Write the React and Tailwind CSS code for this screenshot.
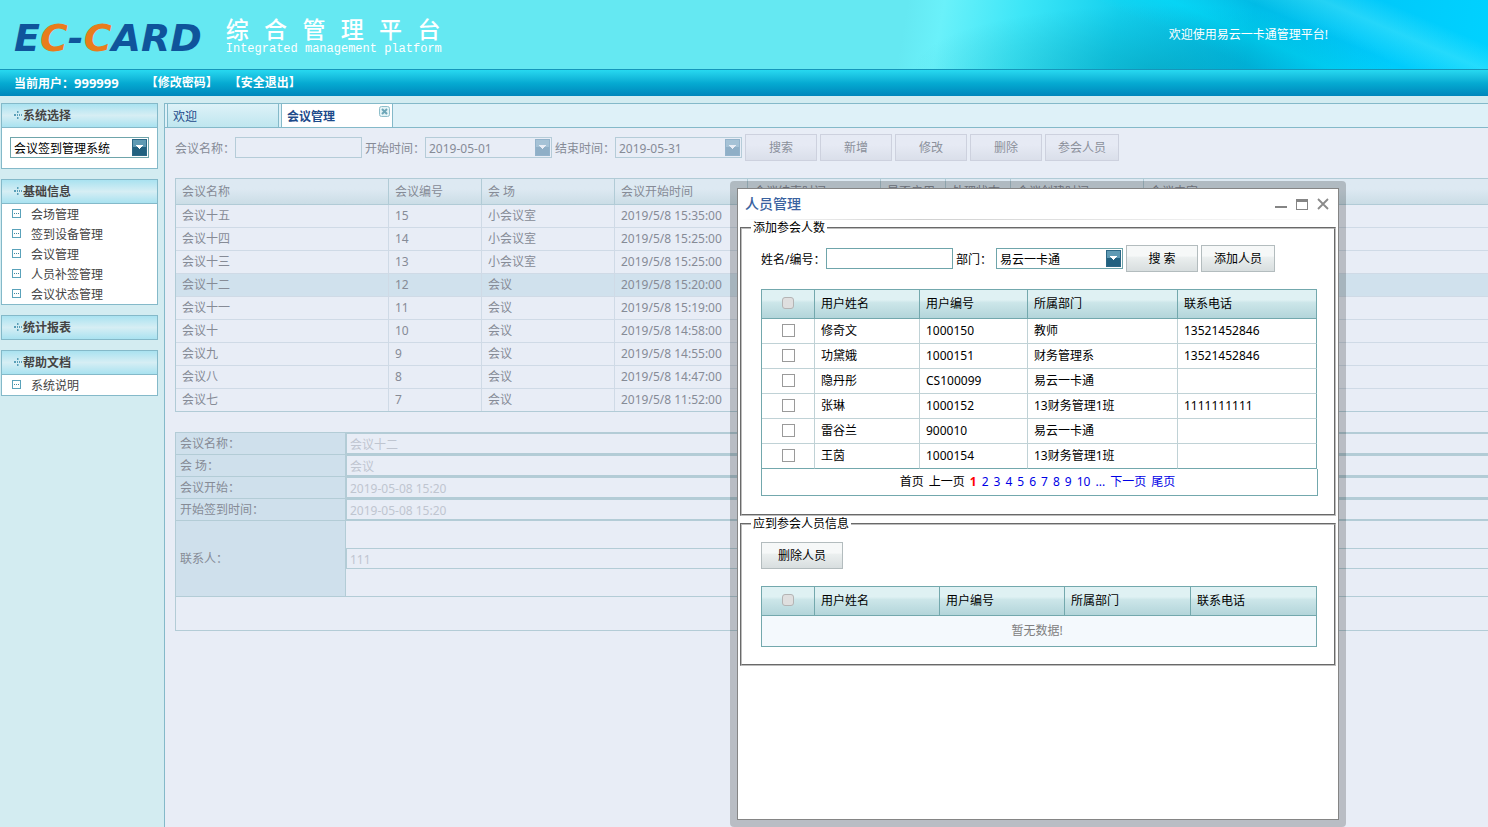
import { useState } from "react";

const menuGroups = [
  {
    title: "基础信息",
    items: ["会场管理", "签到设备管理", "会议管理", "人员补签管理", "会议状态管理"],
  },
  { title: "统计报表", items: [] },
  { title: "帮助文档", items: ["系统说明"] },
];

const meetingColumns = [
  ["会议名称", "w-[213px]"],
  ["会议编号", "w-[93px]"],
  ["会 场", "w-[133px]"],
  ["会议开始时间", "w-[133px]"],
  ["会议结束时间", "w-[133px]"],
  ["是否启用", "w-[65px]"],
  ["处理状态", "w-[65px]"],
  ["会议创建时间", "w-[133px]"],
  ["会议内容", ""],
];

const meetings = [
  ["会议十五", "15", "小会议室", "2019/5/8 15:35:00"],
  ["会议十四", "14", "小会议室", "2019/5/8 15:25:00"],
  ["会议十三", "13", "小会议室", "2019/5/8 15:25:00"],
  ["会议十二", "12", "会议", "2019/5/8 15:20:00"],
  ["会议十一", "11", "会议", "2019/5/8 15:19:00"],
  ["会议十", "10", "会议", "2019/5/8 14:58:00"],
  ["会议九", "9", "会议", "2019/5/8 14:55:00"],
  ["会议八", "8", "会议", "2019/5/8 14:47:00"],
  ["会议七", "7", "会议", "2019/5/8 11:52:00"],
];

const people = [
  ["修奇文", "1000150", "教师", "13521452846"],
  ["功黛娥", "1000151", "财务管理系", "13521452846"],
  ["隐丹彤", "CS100099", "易云一卡通", ""],
  ["张琳", "1000152", "13财务管理1班", "1111111111"],
  ["雷谷兰", "900010", "易云一卡通", ""],
  ["王茵", "1000154", "13财务管理1班", ""],
];

const details = [
  ["会议名称：", "会议十二", "d-name"],
  ["会 场：", "会议", "d-place"],
  ["会议开始：", "2019-05-08 15:20", "d-start"],
  ["开始签到时间：", "2019-05-08 15:20", "d-sign"],
];

function GroupIcon() {
  return (
    <svg width="9" height="9" viewBox="0 0 9 9" fill="#5a9fb8" aria-hidden="true">
      <rect x="0" y="3" width="2" height="2" />
      <rect x="3" y="0" width="1" height="2" />
      <rect x="3" y="3" width="1" height="2" />
      <rect x="3" y="6" width="1" height="2" />
      <rect x="4" y="0" width="1" height="2" opacity="0.5" />
      <rect x="4" y="6" width="1" height="2" opacity="0.5" />
      <rect x="5" y="3" width="1" height="2" />
      <rect x="7" y="3" width="1" height="2" />
    </svg>
  );
}

function ItemIcon() {
  return (
    <svg className="mt-[5px]" width="9" height="9" viewBox="0 0 9 9" aria-hidden="true">
      <rect x="0.5" y="0.5" width="8" height="8" fill="#fff" stroke="#5aa2ba" />
      <rect x="2" y="4" width="1" height="1" fill="#3f88a2" />
      <rect x="4" y="4" width="1" height="1" fill="#3f88a2" />
      <rect x="6" y="4" width="1" height="1" fill="#3f88a2" />
    </svg>
  );
}

function Arrow({ faded }) {
  return (
    <svg
      className="pointer-events-none absolute right-[2px] top-[2px]"
      width="15"
      height="17"
      viewBox="0 0 15 17"
      aria-hidden="true"
    >
      <rect width="15" height="17" fill={faded ? "#93b3cb" : "#2c6886"} />
      <rect x="1" y="1" width="13" height="7" fill={faded ? "#a5c2d6" : "#5f9ab4"} />
      <rect x="1" y="8" width="13" height="8" fill={faded ? "#8fafc7" : "#226180"} />
      <path d="M4 6h7v1h-1v1h-1v1h-1v1h-1v-1h-1v-1h-1v-1h-1z" fill={faded ? "#e8edf6" : "#fff"} />
    </svg>
  );
}

function PanelTitle({ children, open }) {
  return (
    <h2
      className={
        "flex h-[23px] items-center bg-linear-to-b from-[#a9e2f0] via-[#d6eef4] to-[#a9e2f0] pl-[12px] text-[12px] font-bold text-[#444] " +
        (open ? "box-content border-b border-[#84b9c9]" : "")
      }
    >
      <GroupIcon />
      {children}
    </h2>
  );
}

function FadedButton({ children, wide }) {
  return (
    <button
      type="button"
      className={
        "h-[27px] border border-[#cdd1de] bg-linear-to-b from-[#e6eaf4] from-40% to-[#dadfea] text-[#8b909b] " +
        (wide ? "w-[74px]" : "w-[72px]")
      }
    >
      {children}
    </button>
  );
}

function DialogButton({ children, width }) {
  return (
    <button
      type="button"
      className={
        "h-[27px] border border-[#b3bcbe] bg-linear-to-b from-[#f6f8f8] from-40% via-[#ebefef] via-45% to-[#d8dedf] text-black " + width
      }
    >
      {children}
    </button>
  );
}

function HeadCheck({ label }) {
  return (
    <div className="-ml-[6px] flex justify-center pb-[2px]">
      <input
        type="checkbox"
        disabled
        aria-label={label}
        className="block size-[12px] appearance-none rounded-[3px] border border-[#b4b4b4] bg-[#dfdfdf]"
      />
    </div>
  );
}

const headCell =
  "h-[29px] border-r border-b border-[#73a8ad] bg-linear-to-b from-[#dff1f3] from-35% via-[#cce6e9] via-45% to-[#b3d5da] pl-[6px] text-left font-normal";

export default function App() {
  const [checked, setChecked] = useState({});

  return (
    <div
      lang="zh-CN"
      className="relative flex min-h-screen flex-col overflow-hidden bg-[#d3ecf1] font-['Noto_Sans','Noto_Sans_CJK_SC',sans-serif] text-[12px] leading-[16px] text-black"
    >
      <header>
        <div className="flex h-[69px] bg-[#65e8f2]">
          <div className="flex flex-1 gap-[24px] pl-[14px]">
            <div className="pt-[16px] font-['DejaVu_Sans',sans-serif] text-[38px] leading-[44px] font-bold text-[#0f549b] italic">
              E<span className="text-[#e87c1c]">C</span>-<span className="text-[#e87c1c]">C</span>ARD
            </div>
            <div className="pt-[17px] text-white">
              <h1 className="text-[23px] leading-[24px] font-medium whitespace-nowrap">
                {"综\u2002\u2006合\u2002\u2006管\u2002\u2006理\u2002\u2006平\u2002\u2006台"}
              </h1>
              <p className="font-['Liberation_Mono',monospace] text-[12px] leading-[16px] whitespace-nowrap">
                Integrated management platform
              </p>
            </div>
          </div>
          <div className="flex w-[598px] items-center justify-end bg-[radial-gradient(ellipse_240px_64px_at_44%_100%,rgba(0,130,150,0.35),transparent),linear-gradient(203deg,transparent_14%,rgba(120,245,250,0.3)_22%,transparent_32%,rgba(0,225,255,0.5)_42%,transparent_52%),linear-gradient(100deg,#65e8f2_3%,#6af1fa_9%,#3de6f7_22%,#14d0ee_38%,#00bbe6_60%,#00c8fa_78%,#00d2ff_100%)] pr-[160px] text-white">
            欢迎使用易云一卡通管理平台!
          </div>
        </div>
        <div className="flex h-[27px] items-center border-t border-[#1496ba] bg-linear-to-b from-[#27d8f0] via-[#06abd2] to-[#0086bb] pl-[14px] font-bold text-white">
          <span>
            当前用户：<span className="text-[13px]">999999</span>
          </span>
          <a href="#password" className="ml-[27px]">【修改密码】</a>
          <a href="#logout" className="ml-[11px]">【安全退出】</a>
        </div>
      </header>

      <div className="flex flex-1 pt-[7px]">
        <aside className="flex w-[164px] shrink-0 flex-col gap-[10px] pr-[6px] pl-[1px]">
          <section className="border border-[#84b9c9] bg-white">
            <PanelTitle open>系统选择</PanelTitle>
            <div className="h-[40px] px-[8px] pt-[9px]">
              <div className="relative">
                <select
                  aria-label="系统选择"
                  className="block h-[21px] w-full appearance-none border border-[#6fa5ab] bg-white pt-[2px] pl-[3px] leading-[17px]"
                >
                  <option>会议签到管理系统</option>
                </select>
                <Arrow />
              </div>
            </div>
          </section>
          {menuGroups.map((g) => (
            <section key={g.title} className="border border-[#84b9c9] bg-white">
              <PanelTitle open={g.items.length > 0}>{g.title}</PanelTitle>
              {g.items.length > 0 && (
                <ul>
                  {g.items.map((it) => (
                    <li key={it}>
                      <a
                        href={"#" + it}
                        className="flex h-[20px] items-start gap-[10px] pl-[10px] leading-[22px] text-[#444]"
                      >
                        <ItemIcon />
                        {it}
                      </a>
                    </li>
                  ))}
                </ul>
              )}
            </section>
          ))}
        </aside>

        <main className="min-w-0 flex-1 overflow-hidden border-t border-l border-[#84b9c9] bg-[#e8edf6] text-[#868b96]">
          <nav className="flex h-[24px] gap-[2px] border-b border-[#84b9c9] bg-[#def1f8] pl-[2px] leading-[25px] text-[#1d4a8a]">
            <a
              href="#welcome"
              className="w-[112px] border-x border-[#84b9c9] bg-linear-to-b from-[#def2f8] to-[#bfe6ef] pl-[5px]"
            >
              欢迎
            </a>
            <div className="flex w-[112px] items-start justify-between border-x border-[#84b9c9] bg-white pr-[2px] pl-[5px]">
              <a href="#meeting" className="font-bold">会议管理</a>
              <button type="button" aria-label="关闭" className="mt-[2px] size-[11px]">
                <svg className="block" width="11" height="11" viewBox="0 0 11 11" aria-hidden="true">
                  <rect x="0.5" y="0.5" width="10" height="10" rx="2" fill="#e3f3f6" stroke="#8fbfcb" />
                  <path d="M3 3l5 5M8 3l-5 5" stroke="#6ea6b8" strokeWidth="2" />
                </svg>
              </button>
            </div>
          </nav>

          <div className="pl-[10px]">
            <form className="flex items-center gap-[3px] pt-[6px]" onSubmit={(e) => e.preventDefault()}>
              <div className="flex items-center">
                <label htmlFor="q-name" className="w-[60px] pt-[2px]">会议名称：</label>
                <input id="q-name" className="h-[21px] w-[127px] border border-[#b5ccd8] px-[3px]" />
              </div>
              <div className="flex items-center">
                <label htmlFor="q-from" className="w-[60px] pt-[2px]">开始时间：</label>
                <div className="relative">
                  <input
                    id="q-from"
                    defaultValue="2019-05-01"
                    className="block h-[21px] w-[127px] border border-[#b5ccd8] px-[3px] pt-[2px]"
                  />
                  <Arrow faded />
                </div>
              </div>
              <div className="flex items-center">
                <label htmlFor="q-to" className="w-[60px] pt-[2px]">结束时间：</label>
                <div className="relative">
                  <input
                    id="q-to"
                    defaultValue="2019-05-31"
                    className="block h-[21px] w-[127px] border border-[#b5ccd8] px-[3px] pt-[2px]"
                  />
                  <Arrow faded />
                </div>
              </div>
              <FadedButton>搜索</FadedButton>
              <FadedButton>新增</FadedButton>
              <FadedButton>修改</FadedButton>
              <FadedButton>删除</FadedButton>
              <FadedButton wide>参会人员</FadedButton>
            </form>

            <div className="-mr-[4px] mt-[17px]">
              <table className="w-full table-fixed border-separate border-spacing-0 border-t border-b border-l border-[#b1cbd6]">
                <thead>
                  <tr>
                    {meetingColumns.map(([name, w]) => (
                      <th
                        key={name}
                        className={
                          "h-[26px] overflow-hidden border-r border-b border-[#b1cbd6] bg-linear-to-b from-[#dde9f2] from-40% to-[#cbdde6] pl-[6px] text-left font-normal whitespace-nowrap " +
                          w
                        }
                      >
                        {name}
                      </th>
                    ))}
                  </tr>
                </thead>
                <tbody>
                  {meetings.map((m, i) => (
                    <tr key={m[1]} className={i === 3 ? "bg-[#d0e1ed]" : ""}>
                      {meetingColumns.map(([name], c) => (
                        <td
                          key={name}
                          className={
                            "border-r border-[#cfdae6] pl-[6px] " +
                            (i < meetings.length - 1 ? "h-[23px] border-b" : "h-[22px]")
                          }
                        >
                          {m[c]}
                        </td>
                      ))}
                    </tr>
                  ))}
                </tbody>
              </table>

              <table className="mt-[20px] w-full border-separate border-spacing-0 border-t border-l border-[#b3ccd6]">
                <tbody>
                  {details.map(([label, value, id]) => (
                    <tr key={id}>
                      <th className="h-[22px] w-[170px] border-r border-b border-[#b3ccd6] bg-[#cfe0ec] pl-[4px] text-left font-normal">
                        <label htmlFor={id}>{label}</label>
                      </th>
                      <td className="border-b border-[#b3ccd6]">
                        <input
                          id={id}
                          disabled
                          defaultValue={value}
                          className="block h-[21px] w-full border border-[#b3ccd6] px-[3px] pt-px text-[#bfc5d0]"
                        />
                      </td>
                    </tr>
                  ))}
                  <tr>
                    <th className="h-[76px] border-r border-b border-[#b3ccd6] bg-[#cfe0ec] pl-[4px] text-left font-normal">
                      <label htmlFor="d-contact">联系人：</label>
                    </th>
                    <td className="border-b border-[#b3ccd6]">
                      <input
                        id="d-contact"
                        disabled
                        defaultValue="111"
                        className="block h-[21px] w-full border border-[#b3ccd6] px-[3px] pt-px text-[#bfc5d0]"
                      />
                    </td>
                  </tr>
                  <tr>
                    <td colSpan={2} className="h-[34px] border-b border-[#b3ccd6]" />
                  </tr>
                </tbody>
              </table>
            </div>
          </div>
        </main>
      </div>

      <div
        role="dialog"
        aria-labelledby="dlg-title"
        className="absolute top-[181px] left-[730px] flex h-[646px] w-[616px] rounded-[4px] bg-black/20 p-[7px]"
      >
        <div className="flex-1 border border-[#858585] bg-white">
          <div className="flex h-[30px] items-center justify-between pr-[9px] pl-[7px]">
            <h2 id="dlg-title" className="text-[14px] leading-[20px] font-medium text-[#3a62a0]">人员管理</h2>
            <div className="flex items-center gap-[9px]">
              <button type="button" aria-label="最小化">
                <svg width="12" height="12" viewBox="0 0 12 12" className="block" aria-hidden="true">
                  <rect y="8" width="12" height="2" fill="#858585" />
                </svg>
              </button>
              <button type="button" aria-label="最大化">
                <svg width="12" height="12" viewBox="0 0 12 12" className="block" aria-hidden="true">
                  <rect x="0.5" y="1.5" width="11" height="10" fill="none" stroke="#858585" />
                  <rect y="1" width="12" height="3" fill="#858585" />
                </svg>
              </button>
              <button type="button" aria-label="关闭">
                <svg width="12" height="12" viewBox="0 0 12 12" className="block" aria-hidden="true">
                  <path d="M1 1l10 10M11 1l-10 10" stroke="#8a8a8a" strokeWidth="1.8" />
                </svg>
              </button>
            </div>
          </div>
          <div className="h-px bg-linear-to-r from-white via-[#d0d0d0] via-30% to-white" />

          <fieldset className="mx-[2px] border-2 border-[#bdbdbd] px-[9px] [border-style:groove]">
            <legend className="px-[2px] leading-[16px]">添加参会人数</legend>
            <div className="pt-[9px] pr-[7px] pb-[18px] pl-[10px]">
              <div className="flex items-center gap-[3px]">
                <div className="flex items-center">
                  <label htmlFor="p-name" className="w-[65px] pt-[2px]">姓名/编号：</label>
                  <input id="p-name" className="h-[21px] w-[127px] border border-[#6fa5ab] px-[3px]" />
                </div>
                <div className="flex items-center">
                  <label htmlFor="p-dept" className="w-[40px] pt-[2px]">部门：</label>
                  <div className="relative">
                    <select
                      id="p-dept"
                      className="block h-[21px] w-[127px] appearance-none border border-[#6fa5ab] bg-white pt-[2px] pl-[3px] leading-[17px]"
                    >
                      <option>易云一卡通</option>
                    </select>
                    <Arrow />
                  </div>
                </div>
                <DialogButton width="w-[72px]">搜 索</DialogButton>
                <DialogButton width="w-[74px]">添加人员</DialogButton>
              </div>

              <div className="mt-[17px] pr-px">
                <table className="w-full table-fixed border-separate border-spacing-0 border-t border-l border-[#73a8ad]">
                  <thead>
                    <tr>
                      <th className={headCell + " w-[53px]"}>
                        <HeadCheck label="全选用户" />
                      </th>
                      <th className={headCell + " w-[105px]"}>用户姓名</th>
                      <th className={headCell + " w-[108px]"}>用户编号</th>
                      <th className={headCell + " w-[150px]"}>所属部门</th>
                      <th className={headCell}>联系电话</th>
                    </tr>
                  </thead>
                  <tbody>
                    {people.map((p, i) => {
                      const line =
                        "h-[25px] border-b border-r pl-[6px] border-r-[#c0d2d6] last:border-r-[#73a8ad] " +
                        (i < people.length - 1 ? "border-b-[#c0d2d6]" : "border-b-[#73a8ad]");
                      return (
                        <tr key={p[1]}>
                          <td className={line}>
                            <div className="-ml-[6px] flex justify-center pb-[2px]">
                              <input
                                type="checkbox"
                                aria-label={p[0]}
                                checked={!!checked[i]}
                                onChange={() => setChecked({ ...checked, [i]: !checked[i] })}
                                className="block size-[13px] appearance-none border border-[#9a9a9a] bg-white checked:bg-[#2c6886]"
                              />
                            </div>
                          </td>
                          {p.map((v, c) => (
                            <td key={c} className={line}>{v}</td>
                          ))}
                        </tr>
                      );
                    })}
                  </tbody>
                </table>
              </div>
              <nav className="flex h-[27px] items-center justify-center gap-[5px] border-x border-b border-[#73a8ad] pr-[4px] text-[#0000e6]">
                <span className="text-black">首页</span>
                <span className="text-black">上一页</span>
                <span className="font-bold text-[#f00]">1</span>
                {["2", "3", "4", "5", "6", "7", "8", "9", "10", "...", "下一页", "尾页"].map((n) => (
                  <a key={n} href={"#page-" + n}>{n}</a>
                ))}
              </nav>
            </div>
          </fieldset>

          <fieldset className="mx-[2px] border-2 border-[#bdbdbd] px-[9px] [border-style:groove]">
            <legend className="px-[2px] leading-[16px]">应到参会人员信息</legend>
            <div className="flex flex-col items-start gap-[17px] pt-[10px] pr-[8px] pb-[17px] pl-[10px]">
              <DialogButton width="w-[82px]">删除人员</DialogButton>
              <table className="w-full table-fixed border-separate border-spacing-0 border-t border-l border-[#73a8ad]">
                <thead>
                  <tr>
                    <th className={headCell + " w-[53px]"}>
                      <HeadCheck label="全选参会人员" />
                    </th>
                    <th className={headCell + " w-[125px]"}>用户姓名</th>
                    <th className={headCell + " w-[125px]"}>用户编号</th>
                    <th className={headCell + " w-[126px]"}>所属部门</th>
                    <th className={headCell}>联系电话</th>
                  </tr>
                </thead>
                <tbody>
                  <tr>
                    <td colSpan={5} className="h-[31px] border-r border-b border-[#73a8ad] bg-[#f4f9fd] pr-[4px] text-center text-[#808080]">
                      暂无数据!
                    </td>
                  </tr>
                </tbody>
              </table>
            </div>
          </fieldset>
        </div>
      </div>
    </div>
  );
}
